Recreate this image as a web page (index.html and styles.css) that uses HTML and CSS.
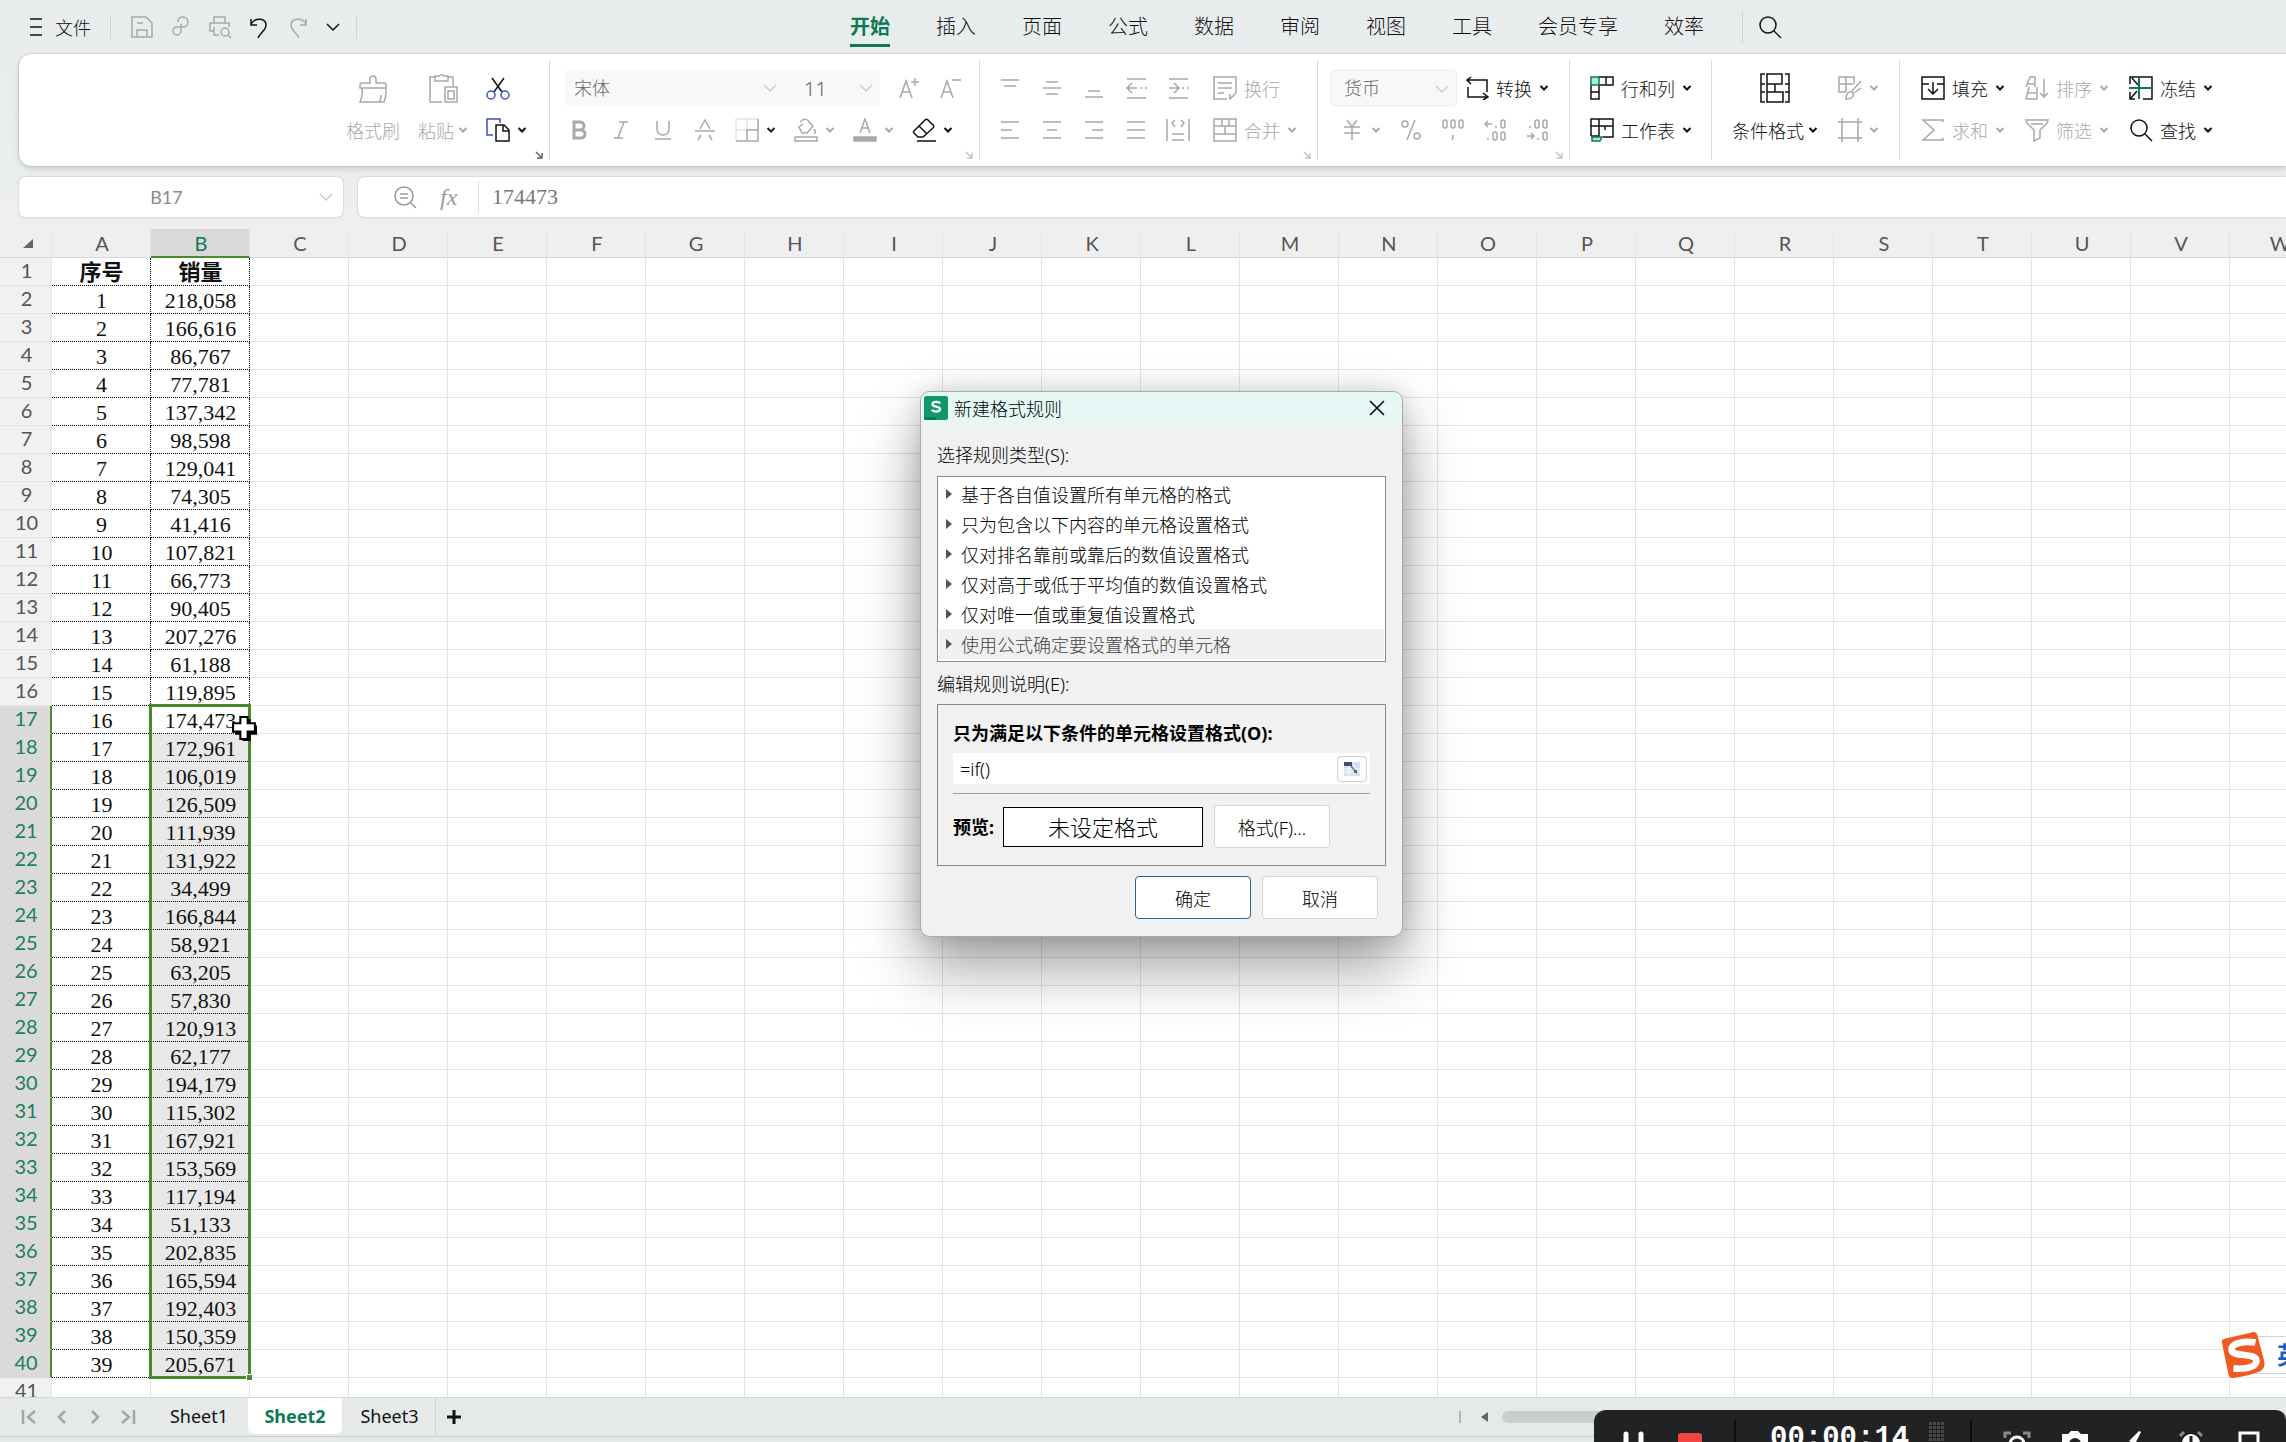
FILE: index.html
```html
<!DOCTYPE html>
<html lang="zh-CN">
<head>
<meta charset="utf-8">
<title>新建格式规则</title>
<link rel="stylesheet" href="styles.css">
</head>
<body>
<svg class="defs" aria-hidden="true">
  <symbol id="menu" viewBox="0 0 24 24"><path d="M6 4h12M6 12h12M6 20h12"/></symbol>
  <symbol id="save" viewBox="0 0 24 24"><path d="M2 2h14l6 6v14H2zM7 22v-7h10v7M7 8h6"/></symbol>
  <symbol id="share" viewBox="0 0 24 24"><path d="M9 7V6a5 5 0 1 1 5 6H8a4 4 0 1 0 4 4V9"/></symbol>
  <symbol id="printview" viewBox="0 0 24 24"><path d="M6 8V2h11v6M6 16H2V8h19v4M6 12v8h5"/><circle cx="17" cy="17" r="4"/><path d="M20 20l3 3"/></symbol>
  <symbol id="undo" viewBox="0 0 24 24"><path d="M4 4v6h6M4 9c4-7 15-6 15 1 0 5-5 7-8 13"/></symbol>
  <symbol id="redo" viewBox="0 0 24 24"><path d="M20 4v6h-6M20 9C16 2 5 3 5 10c0 5 5 7 8 13"/></symbol>
  <symbol id="down" viewBox="0 0 16 10"><path d="M2 2l6 6 6-6"/></symbol>
  <symbol id="caret" viewBox="0 0 10 10"><path d="M1.500 3l3.500 3.500L8.500 3"/></symbol>
  <symbol id="search" viewBox="0 0 24 24"><circle cx="10" cy="10" r="8"/><path d="M16 16l7 7"/></symbol>
  <symbol id="brush" viewBox="0 0 30 30"><path d="M12 10V6a3 3 0 1 1 6 0v4h8a2 2 0 0 1 2 2v3H2v-3a2 2 0 0 1 2-2zM4 15c1 5 0 9-2 14h24c2-4 2-9 2-14M21 29c2-2 2-4 2-7"/></symbol>
  <symbol id="paste" viewBox="0 0 30 30"><path d="M7 4H2v25h12M20 4h5v9M7 3h4a3 3 0 0 1 5 0h4v5H7zM17 14h12v15H17zM20 18h6v8h-6z"/></symbol>
  <symbol id="cut" viewBox="0 0 24 24"><path d="M6 2l10 14M18 2L8 16"/><g class="blue"><circle cx="5" cy="19" r="4"/><circle cx="19" cy="19" r="4"/></g></symbol>
  <symbol id="copy" viewBox="0 0 24 24"><path class="blue" d="M7 17H1V1h13v4"/><path d="M10 7h8l5 5v11H10zM17 7v6h6"/></symbol>
  <symbol id="corner" viewBox="0 0 8 8"><path d="M1 1l6 6M7 2v5H2"/></symbol>
  <symbol id="aplus" viewBox="0 0 24 24"><path d="M3 22L9 5l6 17M5 16h8M18 2v8M14 6h8"/></symbol>
  <symbol id="aminus" viewBox="0 0 24 24"><path d="M3 22L9 5l6 17M5 16h8M14 4h9"/></symbol>
  <symbol id="bold" viewBox="0 0 24 24"><path class="thick" d="M7 4h6a4 4 0 0 1 0 8H7zM7 12h7a4 4 0 0 1 0 8H7z"/></symbol>
  <symbol id="italic" viewBox="0 0 24 24"><path d="M10 4h9M5 20h9M15 4L9 20"/></symbol>
  <symbol id="underline" viewBox="0 0 24 24"><path d="M6 3v8a6 6 0 0 0 12 0V3M4 21h16"/></symbol>
  <symbol id="strike" viewBox="0 0 24 24"><path d="M2 13h20M7 11l5-9 5 9M8 17l-3 5M16 17l3 5"/></symbol>
  <symbol id="border" viewBox="0 0 24 24"><path d="M23 1v22H1M12 23V12h11"/><path class="faint" d="M1 23V1h22M12 1v11M1 12h11"/></symbol>
  <symbol id="fill" viewBox="0 0 24 24"><path d="M6 4c4-4 8-3 9 0l4 4-6 7H8L5 9l4-3M20 11c2 3 2 4 0 4M1 19h22v4H1z"/></symbol>
  <symbol id="fontcolor" viewBox="0 0 24 24"><path d="M7 15l5-14 5 14M8.500 10h7"/><path class="solid" d="M1 19h22v4H1z"/></symbol>
  <symbol id="eraser" viewBox="0 0 24 24"><path d="M2 13L13 2c1-1 2-1 3 0l5 5c1 1 1 2 0 3L11 19H6l-4-4c-1-1-1-1 0-2zM7 8l8 8M5 23h19"/></symbol>
  <symbol id="vtop" viewBox="0 0 24 24"><path d="M3 4h18M6 10h12"/></symbol>
  <symbol id="vmid" viewBox="0 0 24 24"><path d="M6 6h12M3 12h18M6 18h12"/></symbol>
  <symbol id="vbot" viewBox="0 0 24 24"><path d="M6 15h12M3 21h18"/></symbol>
  <symbol id="outdent" viewBox="0 0 24 24"><path d="M3 3h19M3 22h19M3 12h10M16 12h2M21 12h2M8 7l-5 5 5 5"/></symbol>
  <symbol id="indent" viewBox="0 0 24 24"><path d="M3 3h19M3 22h19M3 12h9M16 12h2M21 12h2M8 7l5 5-5 5"/></symbol>
  <symbol id="wrap" viewBox="0 0 24 24"><path d="M14 23H1V1h22v16M5 7h14M5 12h14M5 17h6M23 17l-6 6v-5"/></symbol>
  <symbol id="left" viewBox="0 0 24 24"><path d="M3 4h18M3 12h11M3 20h18"/></symbol>
  <symbol id="center" viewBox="0 0 24 24"><path d="M3 4h18M7 12h10M3 20h18"/></symbol>
  <symbol id="right" viewBox="0 0 24 24"><path d="M3 4h18M10 12h11M3 20h18"/></symbol>
  <symbol id="justify" viewBox="0 0 24 24"><path d="M3 4h18M3 12h18M3 20h18"/></symbol>
  <symbol id="distribute" viewBox="0 0 24 24"><path d="M1 1v22M23 1v22M6 16h12M6 22h12M9 2L6 5l3 4M15 2l3 3-3 4"/></symbol>
  <symbol id="merge" viewBox="0 0 24 24"><path d="M1 1h22v22H1zM1 8h22M1 16h22M9 1v7M16 1v7M12 8v8"/></symbol>
  <symbol id="convert" viewBox="0 0 24 24"><path d="M6 1L2 4l4 4M2 4h20v12M18 17l5 4-5 3M22 21H3V11"/></symbol>
  <symbol id="yen" viewBox="0 0 24 24"><path d="M7 2l5 7 5-7M4 9h16M4 15h16M12 9v13"/></symbol>
  <symbol id="percent" viewBox="0 0 24 24"><circle cx="6" cy="6" r="3"/><circle cx="18" cy="18" r="3"/><path d="M16 2L8 22"/></symbol>
  <symbol id="thousand" viewBox="0 0 24 24"><rect x="2" y="2" width="4" height="8" rx="2"/><rect x="10" y="2" width="4" height="8" rx="2"/><rect x="18" y="2" width="4" height="8" rx="2"/><path d="M12 17v2l-1 3"/></symbol>
  <symbol id="decless" viewBox="0 0 24 24"><rect x="18" y="2" width="4" height="8" rx="2"/><rect x="10" y="14" width="4" height="8" rx="2"/><rect x="18" y="14" width="4" height="8" rx="2"/><path d="M9 6H2M5 3L2 6l3 3M13 8v2M5 20v2"/></symbol>
  <symbol id="decmore" viewBox="0 0 24 24"><rect x="10" y="2" width="4" height="8" rx="2"/><rect x="18" y="2" width="4" height="8" rx="2"/><rect x="18" y="14" width="4" height="8" rx="2"/><path d="M2 18h7M6 15l3 3-3 3M5 8v2M13 20v2"/></symbol>
  <symbol id="rowcol" viewBox="0 0 24 24"><path d="M9 1h14v8H9M16 1v8M1 9v14h8V9M1 16h8"/><path class="green" d="M1 1h8v8H1z"/></symbol>
  <symbol id="sheet" viewBox="0 0 24 24"><path d="M1 18V1h22v18H13M1 8h22M9 1v17H1M15 8v4"/><path class="green" d="M2 19h10l-2 4H2z"/></symbol>
  <symbol id="condfmt" viewBox="0 0 30 30"><path d="M5 1H1v28h4M1 11h4M1 19h4M25 1h4v28h-4M29 11h-4M29 19h-4M7 1h15v10H7zM7 11v18h16V19H7M15 11v8"/></symbol>
  <symbol id="cellstyle" viewBox="0 0 24 24"><path d="M8 16H1V1h15v7M1 8h14M8 1v15M23 5l-9 10M23 12l-7 5M8 23c0-5 2-8 6-7 3 3 1 7-6 7z"/></symbol>
  <symbol id="frame" viewBox="0 0 24 24"><path d="M4 0v24M20 0v24M0 4h24M0 20h24"/></symbol>
  <symbol id="filldown" viewBox="0 0 24 24"><path d="M1 1h22v22H1zM1 8h7M16 8h7M12 6v12M7 13l5 5 5-5"/></symbol>
  <symbol id="sort" viewBox="0 0 24 24"><path d="M1 11L5 1h5v10M3 8h7M4 11L1 23h11V11M2 17h9M19 3v18M15 17l4 4 4-4"/></symbol>
  <symbol id="freeze" viewBox="0 0 24 24"><path d="M1 8V1h22v22h-9M1 16v7h5M3 2l6 7M2 22l6-7"/><path class="greenline" d="M10 1v22M0 12h24"/></symbol>
  <symbol id="sum" viewBox="0 0 24 24"><path d="M22 4V2H2l11 10L2 22h20v-2"/></symbol>
  <symbol id="filter" viewBox="0 0 24 24"><path d="M1 2h22l-1 3-7 7v8l-6 3V12L2 5zM6 6h12"/></symbol>
  <symbol id="zoomout" viewBox="0 0 24 24"><circle cx="11" cy="11" r="9"/><path d="M7 9h8M7 13h8M18 18l5 5"/></symbol>
</svg>

<header class="titlebar">
  <div class="quick">
    <button class="file"><svg class="i24"><use href="#menu"/></svg>文件</button>
    <span class="vline split"></span>
    <button class="dim" aria-label="保存"><svg class="i24"><use href="#save"/></svg></button>
    <button class="dim" aria-label="输出"><svg class="i24"><use href="#share"/></svg></button>
    <button class="dim" aria-label="打印预览"><svg class="i24"><use href="#printview"/></svg></button>
    <button aria-label="撤销"><svg class="i24"><use href="#undo"/></svg></button>
    <button class="dim" aria-label="恢复"><svg class="i24"><use href="#redo"/></svg></button>
    <button aria-label="更多"><svg class="i16"><use href="#down"/></svg></button>
    <span class="vline"></span>
  </div>
  <nav class="menu">
    <a class="on" href="#home">开始</a><a href="#insert">插入</a><a href="#page">页面</a><a href="#formula">公式</a><a href="#data">数据</a><a href="#review">审阅</a><a href="#view">视图</a><a href="#tools">工具</a><a href="#member">会员专享</a><a href="#speed">效率</a>
  </nav>
  <span class="vline tall"></span>
  <button class="find" aria-label="搜索"><svg class="i24"><use href="#search"/></svg></button>
</header>

<section class="ribbon">
  <div class="group g-clip">
    <button class="big dim"><span class="pic"><svg class="i30"><use href="#brush"/></svg></span><span class="cap">格式刷</span></button>
    <button class="big dim"><span class="pic"><svg class="i30"><use href="#paste"/></svg></span><span class="cap">粘贴<svg class="i10"><use href="#caret"/></svg></span></button>
    <div class="rows">
      <div class="row"><button class="tool" aria-label="剪切"><svg class="i24"><use href="#cut"/></svg></button></div>
      <div class="row"><button class="tool" aria-label="复制"><svg class="i24"><use href="#copy"/></svg><svg class="i10"><use href="#caret"/></svg></button></div>
    </div>
    <svg class="launch"><use href="#corner"/></svg>
  </div>
  <div class="group g-font">
    <div class="rows">
      <div class="row combos">
        <span class="combo wide"><select aria-label="字体" disabled><option>宋体</option></select><svg class="i16"><use href="#down"/></svg></span>
        <span class="combo size"><select aria-label="字号" disabled><option>11</option></select><svg class="i16"><use href="#down"/></svg></span>
        <button class="tool dim grow" aria-label="增大字号"><svg class="i24"><use href="#aplus"/></svg></button>
        <button class="tool dim grow" aria-label="减小字号"><svg class="i24"><use href="#aminus"/></svg></button>
      </div>
      <div class="row inset">
        <button class="tool dim" aria-label="加粗"><svg class="i24"><use href="#bold"/></svg></button>
        <button class="tool dim" aria-label="倾斜"><svg class="i24"><use href="#italic"/></svg></button>
        <button class="tool dim" aria-label="下划线"><svg class="i24"><use href="#underline"/></svg></button>
        <button class="tool dim" aria-label="删除线"><svg class="i24"><use href="#strike"/></svg></button>
        <button class="tool dim" aria-label="边框"><svg class="i24"><use href="#border"/></svg><svg class="i10 strong"><use href="#caret"/></svg></button>
        <button class="tool dim" aria-label="填充颜色"><svg class="i24"><use href="#fill"/></svg><svg class="i10"><use href="#caret"/></svg></button>
        <button class="tool dim" aria-label="字体颜色"><svg class="i24"><use href="#fontcolor"/></svg><svg class="i10"><use href="#caret"/></svg></button>
        <button class="tool" aria-label="清除"><svg class="i24"><use href="#eraser"/></svg><svg class="i10"><use href="#caret"/></svg></button>
      </div>
    </div>
    <svg class="launch pale"><use href="#corner"/></svg>
  </div>
  <div class="group g-align">
    <div class="rows">
      <div class="row">
        <button class="tool dim" aria-label="顶端对齐"><svg class="i24"><use href="#vtop"/></svg></button>
        <button class="tool dim" aria-label="垂直居中"><svg class="i24"><use href="#vmid"/></svg></button>
        <button class="tool dim" aria-label="底端对齐"><svg class="i24"><use href="#vbot"/></svg></button>
        <button class="tool dim" aria-label="减少缩进"><svg class="i24"><use href="#outdent"/></svg></button>
        <button class="tool dim" aria-label="增加缩进"><svg class="i24"><use href="#indent"/></svg></button>
        <button class="tool dim lead"><svg class="i24"><use href="#wrap"/></svg>换行</button>
      </div>
      <div class="row">
        <button class="tool dim" aria-label="左对齐"><svg class="i24"><use href="#left"/></svg></button>
        <button class="tool dim" aria-label="居中"><svg class="i24"><use href="#center"/></svg></button>
        <button class="tool dim" aria-label="右对齐"><svg class="i24"><use href="#right"/></svg></button>
        <button class="tool dim" aria-label="两端对齐"><svg class="i24"><use href="#justify"/></svg></button>
        <button class="tool dim" aria-label="分散对齐"><svg class="i24"><use href="#distribute"/></svg></button>
        <button class="tool dim lead"><svg class="i24"><use href="#merge"/></svg>合并<svg class="i10"><use href="#caret"/></svg></button>
      </div>
    </div>
    <svg class="launch pale"><use href="#corner"/></svg>
  </div>
  <div class="group g-num">
    <div class="rows">
      <div class="row tight">
        <span class="combo fmt"><select aria-label="数字格式" disabled><option>货币</option></select><svg class="i16"><use href="#down"/></svg></span>
        <button class="tool"><svg class="i24"><use href="#convert"/></svg>转换<svg class="i10"><use href="#caret"/></svg></button>
      </div>
      <div class="row inset">
        <button class="tool dim" aria-label="货币样式"><svg class="i24"><use href="#yen"/></svg><svg class="i10"><use href="#caret"/></svg></button>
        <button class="tool dim" aria-label="百分比"><svg class="i24"><use href="#percent"/></svg></button>
        <button class="tool dim" aria-label="千位分隔"><svg class="i24"><use href="#thousand"/></svg></button>
        <button class="tool dim" aria-label="减少小数"><svg class="i24"><use href="#decless"/></svg></button>
        <button class="tool dim" aria-label="增加小数"><svg class="i24"><use href="#decmore"/></svg></button>
      </div>
    </div>
    <svg class="launch pale"><use href="#corner"/></svg>
  </div>
  <div class="group g-cells">
    <div class="rows">
      <div class="row"><button class="tool"><svg class="i24"><use href="#rowcol"/></svg>行和列<svg class="i10"><use href="#caret"/></svg></button></div>
      <div class="row"><button class="tool"><svg class="i24"><use href="#sheet"/></svg>工作表<svg class="i10"><use href="#caret"/></svg></button></div>
    </div>
  </div>
  <div class="group g-style">
    <button class="big"><span class="pic"><svg class="i30"><use href="#condfmt"/></svg></span><span class="cap">条件格式<svg class="i10"><use href="#caret"/></svg></span></button>
    <div class="rows">
      <div class="row"><button class="tool dim" aria-label="单元格样式"><svg class="i24"><use href="#cellstyle"/></svg><svg class="i10"><use href="#caret"/></svg></button></div>
      <div class="row"><button class="tool dim" aria-label="表格框"><svg class="i24"><use href="#frame"/></svg><svg class="i10"><use href="#caret"/></svg></button></div>
    </div>
  </div>
  <div class="group g-edit">
    <div class="rows">
      <div class="row">
        <button class="tool"><svg class="i24"><use href="#filldown"/></svg>填充<svg class="i10"><use href="#caret"/></svg></button>
        <button class="tool dim"><svg class="i24"><use href="#sort"/></svg>排序<svg class="i10"><use href="#caret"/></svg></button>
        <button class="tool"><svg class="i24"><use href="#freeze"/></svg>冻结<svg class="i10"><use href="#caret"/></svg></button>
      </div>
      <div class="row">
        <button class="tool dim"><svg class="i24"><use href="#sum"/></svg>求和<svg class="i10"><use href="#caret"/></svg></button>
        <button class="tool dim"><svg class="i24"><use href="#filter"/></svg>筛选<svg class="i10"><use href="#caret"/></svg></button>
        <button class="tool"><svg class="i24"><use href="#search"/></svg>查找<svg class="i10"><use href="#caret"/></svg></button>
      </div>
    </div>
  </div>
</section>

<section class="formulabar">
  <div class="namebox"><input aria-label="名称框" value="B17"><svg class="i16"><use href="#down"/></svg></div>
  <div class="formula">
    <svg class="i24"><use href="#zoomout"/></svg>
    <span class="fx">fx</span>
    <input aria-label="编辑栏" value="174473">
  </div>
</section>

<main class="sheet">
  <table class="grid" id="grid"></table>
  <div class="selection"><span class="handle"></span></div>
  <svg class="cursor" viewBox="0 0 24 24"><path class="shade" d="M10 3h8v6h6v9h-6v6h-8v-6H3v-9h7z"/><path class="cross" d="M8 1h7v6h7v8h-7v7H8v-7H1V7h7z"/></svg>

  <section class="dialog" role="dialog" aria-labelledby="dlg-title">
    <header class="dlg-head">
      <svg class="logo" viewBox="0 0 24 24"><rect width="24" height="24" rx="2" fill="#12976a"/><path d="M0 21h12v3H2a2 2 0 0 1-2-2z" fill="#087a4c"/><path d="M16 7.500C15 5.500 8.500 5 8.500 8.200c0 3.300 7.500 1.700 7.500 5.100 0 3.200-6.800 2.700-8 .4" fill="none" stroke="#fff" stroke-width="2.400"/></svg>
      <h1 id="dlg-title">新建格式规则</h1>
      <button class="close" aria-label="关闭"><svg viewBox="0 0 16 16"><path d="M1 1l14 14M15 1L1 15"/></svg></button>
    </header>
    <div class="dlg-body">
      <p class="label">选择规则类型(S):</p>
      <ul class="rules">
        <li><button>基于各自值设置所有单元格的格式</button></li>
        <li><button>只为包含以下内容的单元格设置格式</button></li>
        <li><button>仅对排名靠前或靠后的数值设置格式</button></li>
        <li><button>仅对高于或低于平均值的数值设置格式</button></li>
        <li><button>仅对唯一值或重复值设置格式</button></li>
        <li class="picked"><button>使用公式确定要设置格式的单元格</button></li>
      </ul>
      <p class="label">编辑规则说明(E):</p>
      <div class="desc">
        <label class="strongtext" for="cond">只为满足以下条件的单元格设置格式(O):</label>
        <div class="condrow">
          <input id="cond" value="=if()">
          <button class="pick" aria-label="选取区域"><svg viewBox="0 0 16 14"><rect width="16" height="14" fill="#cfe2f5"/><path d="M0 7h16M0 10h16M5 3v11M10 3v11" stroke="#fff" stroke-width="1"/><rect width="8" height="4" fill="#3c5068"/><path d="M7 4l6 7" stroke="#7d6f70" stroke-width="1.500"/><rect x="10" y="8" width="3" height="3" fill="#7a5b55"/></svg></button>
        </div>
        <div class="preview">
          <span class="strongtext">预览:</span>
          <output class="sample">未设定格式</output>
          <button class="btn">格式(F)...</button>
        </div>
      </div>
      <div class="actions"><button class="btn primary">确定</button><button class="btn">取消</button></div>
    </div>
  </section>

  <div class="ime"><span class="mode">英</span><svg class="sogou" viewBox="0 0 48 48"><path d="M2 11Q1 8 5 7L35 0q3 0 4 3l7 27q2 7-4 11-12 5-28 7-4 0-5-3z" fill="#ef5a22" stroke="none"/><path d="M37 11C27 9 12 11 12 18c0 9 26 3 26 12 0 8-15 9-24 8" fill="none" stroke="#fff" stroke-width="7"/></svg></div>
</main>

<footer class="sheetbar">
  <div class="navs">
    <button aria-label="第一张"><svg viewBox="0 0 16 16"><path d="M2 1v14M14 2L7 8l7 6"/></svg></button>
    <button aria-label="上一张"><svg viewBox="0 0 16 16"><path d="M11 2L5 8l6 6"/></svg></button>
    <button aria-label="下一张"><svg viewBox="0 0 16 16"><path d="M5 2l6 6-6 6"/></svg></button>
    <button aria-label="最后一张"><svg viewBox="0 0 16 16"><path d="M2 2l7 6-7 6M14 1v14"/></svg></button>
  </div>
  <a class="tab" href="#s1">Sheet1</a><a class="tab current" href="#s2">Sheet2</a><a class="tab last" href="#s3">Sheet3</a>
  <button class="add" aria-label="新建工作表"><svg viewBox="0 0 16 16"><path d="M8 1v14M1 8h14"/></svg></button>
  <div class="hscroll"><span class="grip"></span><span class="arrow"></span><span class="thumb"></span></div>
</footer>

<aside class="recorder">
  <svg class="pause" viewBox="0 0 22 22"><path d="M3 3v18M18 3v18"/></svg>
  <span class="stop"></span>
  <span class="rsep"></span>
  <span class="time">00:00:14</span>
  <span class="meter"></span>
  <span class="rsep"></span>
  <svg class="ri" viewBox="0 0 28 28"><path class="grey" d="M2 7V2h6M20 2h6v5"/><circle cx="14" cy="13" r="7"/></svg>
  <svg class="ri" viewBox="0 0 28 28"><path class="full" d="M1 3h6l3-3h7l3 3h7v22H1z"/><circle class="hole" cx="14" cy="13" r="6"/></svg>
  <svg class="ri" viewBox="0 0 28 28"><path class="full" d="M10 10L20 0l2 1-6 12z"/></svg>
  <svg class="ri" viewBox="0 0 28 28"><path class="grey" d="M3 5l4-4M25 5l-4-4"/><circle class="full" cx="14" cy="12" r="9"/><path class="mark" d="M14 5v8"/></svg>
  <svg class="ri" viewBox="0 0 28 28"><path d="M5 2h18v24H5z"/></svg>
</aside>
<script src="grid.js"></script>
</body>
</html>
```
FILE: styles.css
```css
* { box-sizing: border-box; }
html, body { height: 100%; }
body {
  margin: 0;
  display: flex;
  flex-direction: column;
  overflow: hidden;
  position: relative;
  background: linear-gradient(#e8eced 0, #eaeeef 170px, #efefef 220px);
  font-family: "Noto Sans", "Noto Sans CJK SC", sans-serif;
  font-size: 18px;
  font-weight: 300;
  color: #111;
}
button, select, input { font: inherit; color: inherit; background: none; border: 0; padding: 0; margin: 0; outline: 0; }
button { display: inline-flex; align-items: center; justify-content: center; white-space: nowrap; }
a { color: inherit; text-decoration: none; }
svg { fill: none; stroke: currentColor; stroke-width: 1.5; flex: none; display: block; }
.defs { position: absolute; width: 0; height: 0; }
.i10 { width: 10px; height: 10px; stroke-width: 2; }
.i16 { width: 16px; height: 10px; }
.i24 { width: 24px; height: 24px; }
.i30 { width: 30px; height: 30px; }
.blue { stroke: #3f51b5; }
.green { stroke: #0f7a52; fill: #a8ecd5; }
.greenline { stroke: #0f7a52; stroke-width: 2; }
.thick { stroke-width: 3; }
.faint { opacity: .3; }
.solid { fill: currentColor; }
.dim { color: #a8a8a8; }
.strong { color: #222; }

.titlebar { flex: none; height: 54px; display: flex; align-items: center; padding-left: 24px; }
.quick { display: flex; align-items: center; width: 826px; gap: 15px; height: 36px; }
.file { gap: 7px; }
.vline { width: 1px; height: 24px; background: #cfd3d4; }
.split { margin: 0 4px; }
.menu { display: flex; gap: 46px; font-size: 20px; }
.menu a { line-height: 40px; height: 40px; border-bottom: 3px solid transparent; white-space: nowrap; }
.menu .on { color: #0f7a52; font-weight: 700; border-color: #0f7a52; }
.tall { margin: 0 15px 0 38px; height: 32px; }

.ribbon {
  flex: none;
  display: flex;
  height: 112px;
  margin-left: 19px;
  background: #fff;
  border-radius: 12px 0 0 12px;
  box-shadow: 0 0 2px rgba(0,0,0,.3), 0 3px 6px rgba(0,0,0,.12);
}
.group { position: relative; flex: none; display: flex; margin: 6px 0; padding-top: 10px; border-right: 1px solid #dcdcdc; }
.g-clip { width: 531px; justify-content: flex-end; gap: 18px; padding-right: 22px; }
.g-font { width: 430px; padding-left: 15px; }
.g-align { width: 338px; padding-left: 18px; }
.g-num { width: 252px; padding-left: 12px; }
.g-cells { width: 142px; padding-left: 20px; }
.g-style { width: 188px; padding-left: 20px; gap: 20px; }
.g-edit { flex: 1; padding-left: 21px; border: 0; }
.rows { display: flex; flex-direction: column; gap: 6px; }
.row { display: flex; align-items: center; height: 36px; gap: 18px; }
.g-font .inset { padding-left: 2px; }
.g-num .inset { padding-left: 10px; }
.g-edit .row { gap: 20px; }
.row.tight { gap: 8px; }
.row.combos { gap: 0; }
.tool { gap: 7px; height: 32px; }
.grow { margin-left: 17px; }
.lead { margin-left: 5px; }
.big { flex-direction: column; gap: 6px; height: 78px; }
.pic, .cap { height: 36px; display: flex; align-items: center; gap: 4px; }
.combo { position: relative; display: block; height: 36px; background: #f8f8f8; color: #666; border-radius: 4px; }
.combo svg { position: absolute; right: 6px; top: 13px; color: #ccc; }
.combo select { appearance: none; width: 100%; height: 36px; padding-left: 9px; opacity: 1; }
.wide { width: 219px; }
.size { width: 96px; }
.size select { padding-left: 20px; font-size: 20px; }
.fmt { width: 127px; border: 1px solid #ececec; }
.fmt select { height: 34px; padding-left: 13px; }
.launch { position: absolute; right: 6px; bottom: 1px; width: 8px; height: 8px; color: #666; }
.pale { color: #c4c4c4; }

.formulabar { flex: none; display: flex; gap: 15px; padding: 11px 0 12px 19px; color: #8a8a8a; }
.namebox, .formula { height: 40px; background: #fff; border-radius: 6px; display: flex; align-items: center; box-shadow: 0 0 2px rgba(0,0,0,.3); }
.namebox { width: 324px; padding-right: 9px; }
.namebox input { flex: 1; min-width: 0; padding-right: 4px; text-align: center; font: 400 18px Lato, sans-serif; }
.namebox svg { color: #ccc; }
.formula { flex: 1; padding-left: 35px; border-radius: 6px 0 0 6px; color: #9a9a9a; }
.fx { width: 62px; padding-left: 23px; font: italic 24px/32px "Liberation Serif", serif; border-right: 1px solid #ddd; }
.formula input { flex: 1; padding-left: 13px; font: 22px "Liberation Serif", serif; color: #777; }

.sheet { position: relative; flex: 1; min-height: 0; overflow: hidden; background: #fff; }
.grid { table-layout: fixed; border-collapse: separate; border-spacing: 0; width: 2329px; }
.grid th, .grid td { height: 28px; padding: 0; text-align: center; overflow: hidden; white-space: nowrap; border-right: 1px solid #e4e4e4; border-bottom: 1px solid #e4e4e4; }
.grid th { font: 400 20px/24px Lato, sans-serif; color: #555; background: #f1f1f1; }
.grid thead th { height: 29px; padding-left: 2px; background: #efefef; border-bottom-color: #d6d6d6; }
.grid tbody th { padding: 0 0 3px 2px; }
.grid .corner, .grid tbody th { width: 52px; }
.grid .corner svg { width: 10px; height: 9px; margin-left: 21px; fill: #666; stroke: none; }
.grid thead .hot { background: #d9d9d9; color: #0f7a52; border-bottom: 2px solid #4b8b2f; }
.grid tbody .hot { background: #dadada; color: #1f7f5c; border-right: 2px solid #4b8b2f; border-bottom-color: #dadada; }
.grid td { padding: 2px 0 0 1px; font: 22px/25px "Liberation Serif", "Noto Sans CJK SC", serif; color: #111; }
.grid .num { border-right: 1px dotted #000; border-bottom: 1px dotted #000; }
.grid .title { font-weight: 700; }
.grid .filled { background: #e8e8e8; }
.selection { position: absolute; left: 149px; top: 475px; width: 102px; height: 675px; border: 3px solid #4b8b2f; }
.handle { position: absolute; right: -5px; bottom: -5px; width: 7px; height: 7px; background: #4b8b2f; border: 1px solid #fff; }
.cursor { position: absolute; left: 232px; top: 487px; width: 25px; height: 25px; }
.shade { fill: #000; stroke: none; }
.cross { fill: #fff; stroke: #000; stroke-width: 2; }

.dialog {
  position: absolute; left: 920px; top: 162px; width: 483px;
  background: #f1f1f1; border-radius: 10px; border: 1px solid #aaa;
  box-shadow: 0 30px 60px rgba(0,0,0,.38), 0 0 24px rgba(0,0,0,.14);
  overflow: hidden; color: #000;
}
.dlg-head { display: flex; align-items: center; height: 40px; padding: 0 17px 8px 3px; background: linear-gradient(#e6f8f6 0, #e6f8f6 60%, #f1f1f1); }
.dlg-head h1 { margin: 0 auto 0 6px; font-size: 18px; font-weight: inherit; }
.logo { width: 24px; height: 24px; stroke: none; }
.close svg { width: 16px; height: 16px; }
.dlg-body { padding: 9px 16px 17px; }
.label { margin: 0; line-height: 28px; }
.rules { list-style: none; margin: 7px 0 8px; padding: 2px 1px; border: 1px solid #8a8a8a; background: #fff; height: 186px; }
.rules li { height: 30px; padding-left: 7px; display: flex; align-items: center; }
.rules li::before { content: ""; border: 5px solid transparent; border-left: 6px solid #555; border-right: 0; margin-right: 9px; }
.rules .picked { background: #f0f0f0; color: #444; }
.desc { margin-top: 6px; border: 1px solid #8a8a8a; padding: 14px 15px 17px; }
.strongtext { font-weight: 700; line-height: 28px; white-space: nowrap; }
.desc label { display: block; }
.condrow { display: flex; align-items: center; height: 31px; margin-top: 6px; background: #fff; padding-right: 3px; }
.condrow input { flex: 1; min-width: 0; padding-left: 7px; }
.pick { width: 30px; height: 26px; border: 1px solid #d0d0d0; border-radius: 4px; }
.pick svg { width: 16px; height: 14px; stroke: none; }
.preview { display: flex; align-items: center; margin-top: 9px; padding-top: 11px; border-top: 1px solid #a0a0a0; }
.preview .strongtext { width: 50px; }
.sample { width: 200px; height: 40px; border: 1px solid #000; background: #fff; font-size: 22px; line-height: 38px; text-align: center; margin-right: 11px; }
.btn { width: 116px; height: 43px; background: #fff; border: 1px solid #d4d4d4; border-radius: 4px; }
.primary { border-color: #2f6285; }
.actions { display: flex; justify-content: flex-end; gap: 11px; padding-right: 8px; margin-top: 10px; }

.ime { position: absolute; right: 0; bottom: 19px; width: 67px; height: 46px; display: flex; align-items: center; }
.mode { flex: none; width: 40px; height: 38px; margin-left: 27px; padding-left: 30px; border: 1px solid #ccd3da; border-right: 0; background: #fff; overflow: hidden; white-space: nowrap; color: #1463c4; font-size: 24px; font-weight: 700; line-height: 36px; }
.sogou { position: absolute; left: 0; top: 0; width: 48px; height: 46px; }

.sheetbar { flex: none; height: 45px; display: flex; background: linear-gradient(#e5e9ea 38px, #c9cdce 38px, #c9cdce 39px, #e5e9ea 39px); border-top: 1px solid #d5d9da; font-weight: 400; }
.sheetbar svg { width: 16px; height: 16px; }
.navs { display: flex; gap: 17px; padding-left: 21px; height: 37px; color: #a2a6a7; width: 149px; }
.navs svg { stroke-width: 2.500; }
.tab { width: 94px; height: 36px; line-height: 36px; text-align: center; margin-left: 3px; }
.current { margin-left: 2px; background: #fff; border-radius: 0 0 6px 6px; color: #0f7a52; font-weight: 700; }
.tab.last { border-right: 1px solid #cfd3d4; width: 92px; margin-left: 2px; }
.add { margin-left: 10px; height: 37px; }
.add svg { stroke-width: 3; }
.hscroll { flex: 1; display: flex; align-items: center; height: 37px; padding-left: 997px; }
.grip { width: 2px; height: 12px; background: #b0b4b5; margin-right: 20px; }
.arrow { border: 5px solid transparent; border-right: 7px solid #666; border-left: 0; margin-right: 14px; }
.thumb { flex: 1; height: 12px; border-radius: 6px; background: #c9cdce; }

.recorder { position: absolute; right: 0; bottom: 0; width: 692px; height: 32px; display: flex; align-items: flex-start; padding: 21px 20px 0 29px; background: #212223; border-radius: 12px 10px 0 0; color: #fff; overflow: hidden; }
.pause { width: 22px; height: 22px; stroke-width: 5; stroke-linecap: round; }
.stop { flex: none; width: 24px; height: 24px; margin: 2px 32px 0 33px; border-radius: 3px; background: #f24545; }
.rsep { flex: none; width: 2px; height: 30px; margin-top: -11px; background: #0c0c0c; }
.time { flex: none; margin: -8px 18px 0 34px; width: 140px; font: 700 29px/32px "Liberation Mono", monospace; }
.meter { flex: none; width: 16px; height: 24px; margin: -9px 26px 0 0; background: repeating-linear-gradient(90deg, #212223 0 1px, transparent 1px 4px), repeating-linear-gradient(#484848 0 3px, #212223 3px 4px); }
.ri { width: 28px; height: 28px; margin-left: 30px; stroke-width: 3; }
.rsep + .ri { margin-left: 31px; }
.grey { stroke: #8a8a8a; }
.full { fill: #fff; stroke: none; }
.hole { fill: #212223; stroke: none; }
.mark { stroke: #212223; }
```
FILE: grid.js
```js
const sales = ['218,058', '166,616', '86,767', '77,781', '137,342', '98,598', '129,041', '74,305', '41,416', '107,821',
  '66,773', '90,405', '207,276', '61,188', '119,895', '174,473', '172,961', '106,019', '126,509', '111,939',
  '131,922', '34,499', '166,844', '58,921', '63,205', '57,830', '120,913', '62,177', '194,179', '115,302',
  '167,921', '153,569', '117,194', '51,133', '202,835', '165,594', '192,403', '150,359', '205,671'];
const letters = 'ABCDEFGHIJKLMNOPQRSTUVW'.split('');

const head = '<thead><tr><th class="corner"><svg viewBox="0 0 10 9"><path d="M10 0v9H0z"/></svg></th>' +
  letters.map(l => `<th${l === 'B' ? ' class="hot"' : ''}>${l}</th>`).join('') + '</tr></thead>';

let body = '';
for (let r = 1; r <= 41; r++) {
  const picked = r >= 17 && r <= 40;
  body += `<tr><th${picked ? ' class="hot"' : ''}>${r}</th>`;
  letters.forEach((l, c) => {
    if (c > 1 || r > 40) { body += '<td></td>'; return; }
    const value = r === 1 ? ['序号', '销量'][c] : [r - 1, sales[r - 2]][c];
    const cls = 'num' + (r === 1 ? ' title' : '') + (c === 1 && r > 17 && picked ? ' filled' : '');
    body += `<td class="${cls}">${value}</td>`;
  });
  body += '</tr>';
}
document.getElementById('grid').innerHTML = head + '<tbody>' + body + '</tbody>';
```
